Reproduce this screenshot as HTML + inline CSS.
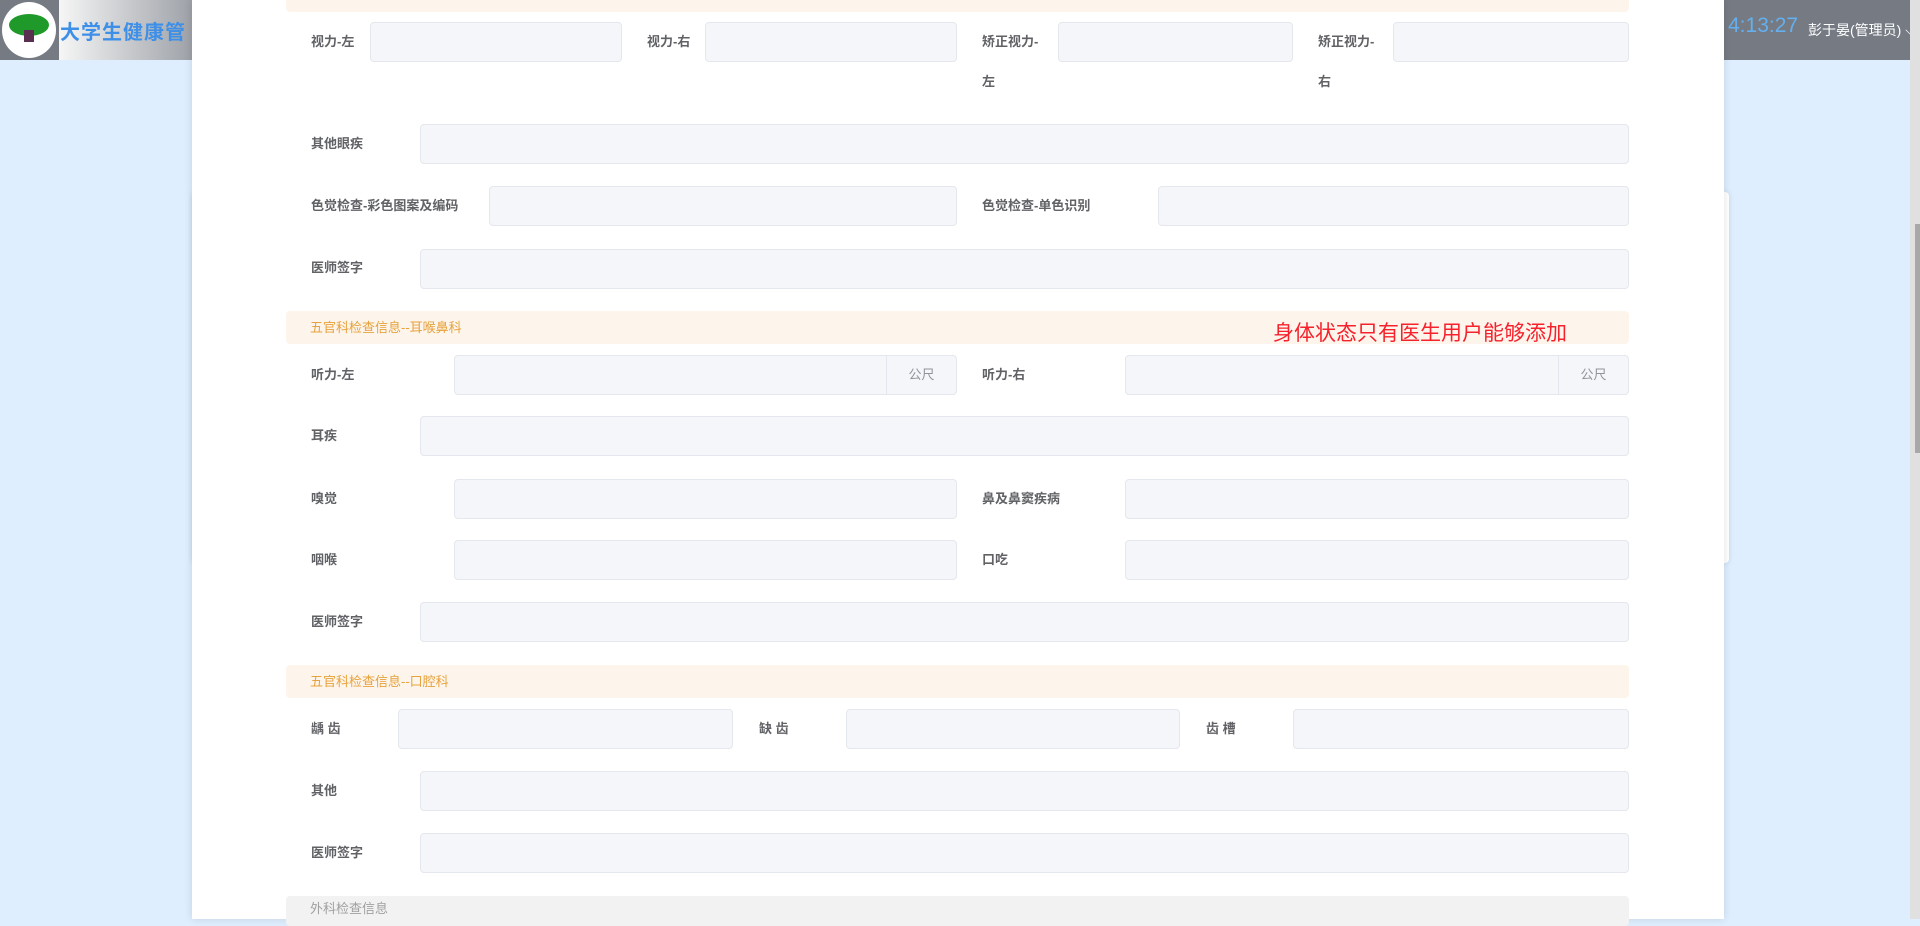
<!DOCTYPE html>
<html><head><meta charset="utf-8"><style>
*{margin:0;padding:0;box-sizing:border-box}
body{width:1920px;height:919px;overflow:hidden;background:#deeefe;position:relative;font-family:"Liberation Sans","Noto Sans CJK SC",sans-serif}
.a{position:absolute}
.in{position:absolute;background:#f5f6fa;border:1px solid #e4e7ed;border-radius:4px;height:40px}
.lb{position:absolute;font-size:13px;color:#606266;font-weight:bold;line-height:20px}
.band{position:absolute;left:286px;width:1343px;background:#fdf5ec;border-radius:4px;color:#e6a23c;font-size:13px;padding-left:24px}
.ad{position:absolute;right:0;top:0;bottom:0;width:70px;border-left:1px solid #e4e7ed;color:#909399;font-size:13px;text-align:center;line-height:38px}
</style></head><body>
<div class="a" style="left:0;top:0;width:1920px;height:60px;background:#767b83"></div>
<div class="a" style="left:59px;top:0;width:133px;height:60px;background:linear-gradient(90deg,#f6f6f6,#9ea2a8)"></div>
<div class="a" style="left:2px;top:2px;width:54px;height:56px;border-radius:50%;background:#fff"></div>
<div class="a" style="left:9px;top:14px;width:40px;height:22px;border-radius:50%;background:#1f9a2a"></div>
<div class="a" style="left:24px;top:30px;width:10px;height:12px;background:#5a3050"></div>
<div class="a" style="left:60px;top:16px;font-size:20px;font-weight:bold;color:#3d8fe8;letter-spacing:1px">大学生健康管</div>
<div class="a" style="left:1728px;top:14px;font-size:21px;color:#63aff0">4:13:27</div>
<div class="a" style="left:1808px;top:20px;font-size:14px;color:#fff">彭于晏(管理员) ⌵</div>
<div class="a" style="left:192px;top:192px;width:1537px;height:371px;background:#fff;border-radius:4px;box-shadow:0 0 6px rgba(0,0,0,.1)"></div>
<div class="a" style="left:192px;top:0;width:1532px;height:919px;background:#fff;box-shadow:0 0 8px rgba(0,0,0,.12)"></div>
<div class="a" style="left:1910px;top:0;width:10px;height:919px;background:#e0e0e0"></div>
<div class="a" style="left:1915px;top:224px;width:5px;height:229px;background:#a8a8a8"></div>

<div class="band" style="top:0;height:12px;border-radius:0 0 4px 4px"></div>

<div class="lb" style="left:311px;top:32px">视力-左</div><div class="in" style="left:370px;top:22px;width:252px"></div>
<div class="lb" style="left:647px;top:32px">视力-右</div><div class="in" style="left:705px;top:22px;width:252px"></div>
<div class="lb" style="left:982px;top:32px;width:70px;line-height:40px;top:22px">矫正视力-<br>左</div><div class="in" style="left:1058px;top:22px;width:235px"></div>
<div class="lb" style="left:1318px;top:22px;width:70px;line-height:40px">矫正视力-<br>右</div><div class="in" style="left:1393px;top:22px;width:236px"></div>

<div class="lb" style="left:311px;top:134px">其他眼疾</div><div class="in" style="left:420px;top:124px;width:1209px"></div>
<div class="lb" style="left:311px;top:196px">色觉检查-彩色图案及编码</div><div class="in" style="left:489px;top:186px;width:468px"></div>
<div class="lb" style="left:982px;top:196px">色觉检查-单色识别</div><div class="in" style="left:1158px;top:186px;width:471px"></div>
<div class="lb" style="left:311px;top:258px">医师签字</div><div class="in" style="left:420px;top:249px;width:1209px"></div>

<div class="band" style="top:311px;height:33px;line-height:33px">五官科检查信息--耳喉鼻科</div>
<div class="a" style="left:1273px;top:317px;font-size:21px;color:#f5222d">身体状态只有医生用户能够添加</div>

<div class="lb" style="left:311px;top:365px">听力-左</div><div class="in" style="left:454px;top:355px;width:503px"><div class="ad">公尺</div></div>
<div class="lb" style="left:982px;top:365px">听力-右</div><div class="in" style="left:1125px;top:355px;width:504px"><div class="ad">公尺</div></div>
<div class="lb" style="left:311px;top:426px">耳疾</div><div class="in" style="left:420px;top:416px;width:1209px"></div>
<div class="lb" style="left:311px;top:489px">嗅觉</div><div class="in" style="left:454px;top:479px;width:503px"></div>
<div class="lb" style="left:982px;top:489px">鼻及鼻窦疾病</div><div class="in" style="left:1125px;top:479px;width:504px"></div>
<div class="lb" style="left:311px;top:550px">咽喉</div><div class="in" style="left:454px;top:540px;width:503px"></div>
<div class="lb" style="left:982px;top:550px">口吃</div><div class="in" style="left:1125px;top:540px;width:504px"></div>
<div class="lb" style="left:311px;top:612px">医师签字</div><div class="in" style="left:420px;top:602px;width:1209px"></div>

<div class="band" style="top:665px;height:33px;line-height:33px">五官科检查信息--口腔科</div>
<div class="lb" style="left:311px;top:719px">龋 齿</div><div class="in" style="left:398px;top:709px;width:335px"></div>
<div class="lb" style="left:759px;top:719px">缺 齿</div><div class="in" style="left:846px;top:709px;width:334px"></div>
<div class="lb" style="left:1206px;top:719px">齿 槽</div><div class="in" style="left:1293px;top:709px;width:336px"></div>
<div class="lb" style="left:311px;top:781px">其他</div><div class="in" style="left:420px;top:771px;width:1209px"></div>
<div class="lb" style="left:311px;top:843px">医师签字</div><div class="in" style="left:420px;top:833px;width:1209px"></div>
<div class="band" style="top:896px;height:30px;line-height:26px;background:#f2f2f2;color:#a0a0a0">外科检查信息</div>
</body></html>
